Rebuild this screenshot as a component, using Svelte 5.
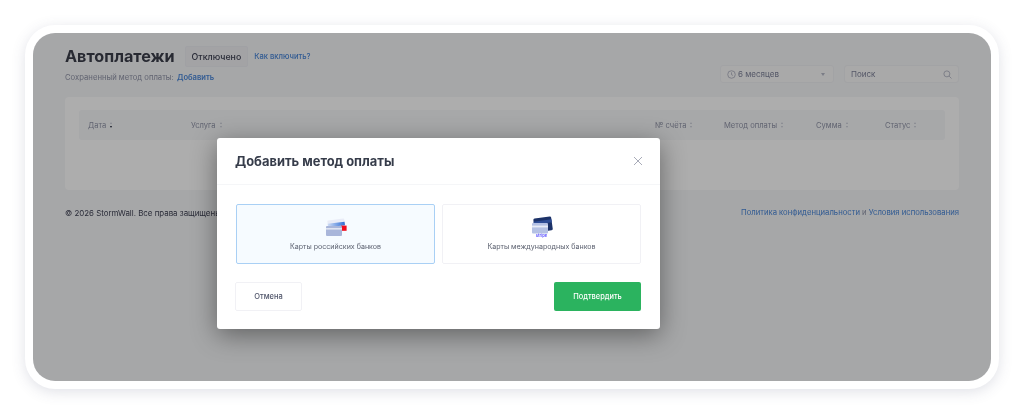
<script>
	const columns = [
		{ label: 'Дата', active: true },
		{ label: 'Услуга' },
		{ label: '№ счёта' },
		{ label: 'Метод оплаты' },
		{ label: 'Сумма' },
		{ label: 'Статус' }
	];
</script>

<div class="page">
	<div class="frame">
		<div class="screen">
			<div class="content">
				<header class="head">
					<div>
						<div class="title-row">
							<h1>Автоплатежи</h1>
							<span class="badge">Отключено</span>
							<a class="link how" href="#how">Как включить?</a>
						</div>
						<p class="saved">Сохраненный метод оплаты: <a class="link add" href="#add">Добавить</a></p>
					</div>
					<div class="tools">
						<div class="field period">
							<svg class="clock" viewBox="0 0 10 10" width="9" height="9">
								<circle cx="5" cy="5" r="4.2" />
								<path d="M5 2.6V5.2L6.6 6" />
							</svg>
							<span>6 месяцев</span>
							<i class="caret"></i>
						</div>
						<div class="field search">
							<span>Поиск</span>
							<svg viewBox="0 0 10 10" width="9" height="9">
								<circle cx="4.3" cy="4.3" r="3.3" />
								<path d="M6.8 6.8L9.4 9.4" />
							</svg>
						</div>
					</div>
				</header>

				<section class="card">
					<div class="table-head">
						{#each columns as col}
							<div class="col">
								{col.label}
								<span class="sort" class:active={col.active}><i></i><i></i></span>
							</div>
						{/each}
					</div>
				</section>

				<footer class="foot">
					<span class="copy">© 2026 StormWall. Все права защищены.</span>
					<span class="legal"><a class="link" href="#p">Политика конфиденциальности</a> и <a class="link" href="#t">Условия использования</a></span>
				</footer>
			</div>

			<div class="overlay">
				<div class="modal">
					<div class="modal-head">
						<h2>Добавить метод оплаты</h2>
						<svg class="close" viewBox="0 0 10 10" width="10" height="10">
							<path d="M1 1L9 9M9 1L1 9" />
						</svg>
					</div>
					<div class="modal-body">
						<div class="options">
							<button class="option selected">
								<svg class="card-icon" viewBox="0 0 24 20" width="24" height="20">
									<defs>
										<linearGradient id="ru-band" x1="0" x2="1" y1="0" y2="0">
											<stop offset="0" stop-color="#cfdcf5" />
											<stop offset="1" stop-color="#2f6fd6" />
										</linearGradient>
									</defs>
									<g transform="rotate(-7 12 8)">
										<rect x="4" y="1.5" width="17" height="12" rx="1" fill="#e9ecf7" />
										<rect x="4" y="4.8" width="17" height="3.6" fill="url(#ru-band)" />
									</g>
									<rect x="17" y="7.6" width="5.6" height="5.2" fill="#f00d1e" />
									<rect x="2" y="8" width="16" height="10" rx="1" fill="#a9b6da" />
									<rect x="2" y="10" width="16" height="1.6" fill="#dfe4f2" />
								</svg>
								<span>Карты российских банков</span>
							</button>
							<button class="option">
								<span class="intl-icon">
									<svg viewBox="0 0 24 18" width="24" height="18">
										<g transform="rotate(-8 13 8)">
											<rect x="4" y="1.5" width="18" height="14" rx="1.4" fill="#1c3268" />
											<rect x="4" y="4.5" width="18" height="3" fill="#2e4d96" />
										</g>
										<rect x="2" y="7" width="16" height="10.5" rx="1" fill="#b4c1e4" />
										<rect x="2" y="9.6" width="16" height="1.8" fill="#e9edf7" />
									</svg>
									<em>stripe</em>
								</span>
								<span>Карты международных банков</span>
							</button>
						</div>
						<div class="actions">
							<button class="btn cancel">Отмена</button>
							<button class="btn confirm">Подтвердить</button>
						</div>
					</div>
				</div>
			</div>
		</div>
	</div>
</div>

<style>
	:global(body) {
		margin: 0;
		background: #fff;
	}

	.page {
		width: 1024px;
		height: 414px;
		box-sizing: border-box;
		padding: 25px;
		overflow: hidden;
		font-family: Inter, "Liberation Sans", sans-serif;
	}

	.frame {
		height: 364px;
		box-sizing: border-box;
		padding: 8px;
		background: #fff;
		border-radius: 30px;
		box-shadow: 0 3px 14px rgba(70, 75, 110, 0.17);
		filter: blur(0.5px);
	}

	.screen {
		position: relative;
		height: 348px;
		overflow: hidden;
		background: #f5f6f8;
		border-radius: 22px;
	}

	.content {
		padding: 13px 32px 0;
		color: #3f4254;
	}

	/* ── Page header ─────────────────────────────── */
	.head {
		display: flex;
		justify-content: space-between;
		height: 51px;
	}

	.title-row {
		display: flex;
		align-items: center;
		height: 20px;
	}

	h1 {
		margin: 0;
		font-size: 16.2px;
		font-weight: 700;
		color: #3b3e4b;
		line-height: 20px;
	}

	.badge {
		margin-left: 10px;
		padding: 0 6px;
		height: 19px;
		line-height: 19px;
		font-size: 8.8px;
		font-weight: 500;
		color: #3f4254;
		background: #f1f1f4;
		border: 0.5px solid #eceef2;
		border-radius: 2px;
	}

	.link {
		color: #4a87d8;
		text-decoration: none;
	}

	.how {
		margin-left: 6px;
		font-size: 7.6px;
		font-weight: 500;
	}

	.saved {
		margin: 7px 0 0;
		font-size: 7.7px;
		line-height: 10px;
		color: #8f93a6;
	}

	.add {
		margin-left: 1px;
		font-weight: 600;
		font-size: 7.6px;
	}

	.tools {
		display: flex;
		gap: 10px;
		margin-top: 19px;
	}

	.field {
		display: flex;
		align-items: center;
		box-sizing: border-box;
		height: 18px;
		padding: 0 6px;
		font-size: 8px;
		color: #7e8299;
		background: #f9f9f9;
		border: 0.5px solid #eff0f3;
		border-radius: 3px;
	}

	.field svg {
		fill: none;
		stroke: #a1a5b7;
		stroke-width: 0.8;
	}

	.period {
		width: 114px;
		gap: 2px;
	}

	.caret {
		margin-left: auto;
		margin-right: 2px;
		border: 2.5px solid transparent;
		border-top: 3.5px solid #b5b8c6;
		border-bottom: 0;
	}

	.search {
		width: 115px;
		justify-content: space-between;
	}

	/* ── Table card ──────────────────────────────── */
	.card {
		box-sizing: border-box;
		height: 93px;
		padding: 13px 14px;
		background: #fff;
		border-radius: 4px;
	}

	.table-head {
		display: grid;
		grid-template-columns: 103px 464px 69px 92px 69px 1fr;
		align-items: center;
		height: 30px;
		padding-left: 9px;
		font-size: 7.6px;
		color: #8f93a6;
		background: #f7f8fa;
		border-radius: 3px;
	}

	.col {
		display: flex;
		align-items: center;
		gap: 4px;
	}

	.sort {
		display: flex;
		flex-direction: column;
		gap: 1.5px;
	}

	.sort i {
		border: 1.5px solid transparent;
		border-top: 0;
		border-bottom: 2px solid #c4c6d2;
	}

	.sort i + i {
		border-bottom: 0;
		border-top: 2px solid #c4c6d2;
	}

	.sort.active i + i {
		border-top-color: #181c32;
	}

	.foot {
		display: flex;
		justify-content: space-between;
		margin-top: 18px;
		line-height: 10px;
	}

	.copy {
		font-size: 7.9px;
		color: #3f4254;
	}

	.legal {
		font-size: 7.7px;
		color: #8f93a6;
	}

	/* ── Modal ───────────────────────────────────── */
	.overlay {
		position: absolute;
		inset: 0;
		display: flex;
		justify-content: flex-start;
		align-items: flex-start;
		padding: 105px 0 0 184px;
		background: rgba(0, 0, 0, 0.32);
	}

	.modal {
		width: 443px;
		height: 191px;
		background: #fff;
		border-radius: 3px;
		box-shadow: 0 6px 26px rgba(0, 0, 0, 0.42);
	}

	.modal-head {
		display: flex;
		justify-content: space-between;
		align-items: center;
		box-sizing: border-box;
		height: 47px;
		padding: 0 17px 0 18px;
		border-bottom: 1px solid #f5f6f8;
	}

	h2 {
		margin: 0;
		font-size: 12.9px;
		font-weight: 700;
		color: #363c4a;
	}

	.close {
		fill: none;
		stroke: #a8abb8;
		stroke-width: 1;
	}

	.modal-body {
		padding: 19px 18px 0;
	}

	.options {
		display: grid;
		grid-template-columns: 199px 199px;
		gap: 7px;
		margin-left: 1px;
	}

	.option {
		display: flex;
		flex-direction: column;
		align-items: center;
		justify-content: flex-end;
		box-sizing: border-box;
		height: 60px;
		padding: 0 0 12px;
		gap: 4px;
		font: inherit;
		font-size: 7.1px;
		line-height: 9px;
		color: #5b606f;
		background: #fff;
		border: 1px solid #f1f1f5;
		border-radius: 2px;
	}

	.option.selected {
		background: #f6fbff;
		border-color: #a9d0f5;
	}

	.card-icon {
		display: block;
	}

	.intl-icon {
		display: flex;
		flex-direction: column;
		align-items: center;
	}

	.intl-icon svg {
		display: block;
	}

	.intl-icon em {
		font-style: normal;
		font-size: 4px;
		line-height: 4px;
		font-weight: 700;
		color: #635bff;
	}

	.actions {
		display: flex;
		justify-content: space-between;
		margin-right: 1px;
		margin-top: 18px;
	}

	.btn {
		box-sizing: border-box;
		height: 29px;
		font: inherit;
		font-weight: 500;
		border-radius: 2px;
	}

	.cancel {
		width: 67px;
		font-size: 7.5px;
		color: #50556a;
		background: #fff;
		border: 1px solid #f1f1f5;
	}

	.confirm {
		width: 87px;
		font-size: 7.4px;
		color: #fff;
		background: #2bb35f;
		border: 0;
	}
</style>
